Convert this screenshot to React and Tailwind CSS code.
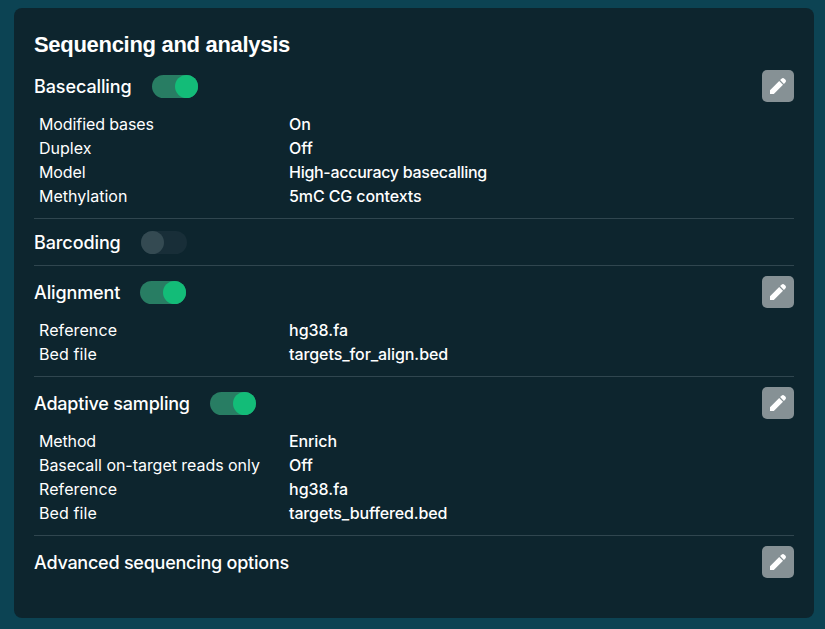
function Toggle({ on }) {
  return (
    <span className={`flex h-[23px] w-[46px] items-center rounded-full ${on ? 'justify-end bg-[#287d63]' : 'justify-start bg-[#182e38]'}`}>
      <span className={`size-[23px] rounded-full ${on ? 'bg-[#13bc78]' : 'bg-[#344a52]'}`} />
    </span>
  );
}

function EditButton() {
  return (
    <button className="ml-auto flex size-8 items-center justify-center rounded-[5px] bg-[#869195]">
      <svg viewBox="0 0 16 16" className="size-4 fill-white">
        <path d="M0 12.2V16h3.8L13 6.8 9.2 3zM10.1 2.1l1.4-1.4c1-.9 2-.9 2.9 0l.9.9c.9.9.9 1.9 0 2.9l-1.4 1.4z" />
      </svg>
    </button>
  );
}

function Heading({ title, width, tracking, on, toggle = true, edit = true }) {
  return (
    <div className={`flex items-center ${edit ? 'h-8' : 'h-[30px]'}`}>
      <h2 className={`${width} ${tracking} whitespace-nowrap text-[18px] font-medium leading-8 ${edit ? 'pt-px' : 'pt-[2px]'}`}>{title}</h2>
      {toggle && <Toggle on={on} />}
      {edit && <EditButton />}
    </div>
  );
}

function Details({ rows }) {
  return (
    <dl className="mt-[10px] grid grid-cols-[250px_1fr] pl-[5px] text-[16px] leading-6">
      {rows.map(([label, value, labelTracking = '', valueTracking = '']) => (
        <div key={label} className="contents">
          <dt className={labelTracking}>{label}</dt>
          <dd className={`font-medium ${valueTracking}`}>{value}</dd>
        </div>
      ))}
    </dl>
  );
}

export default function App() {
  return (
    <div className="h-[629px] w-[825px] bg-[#0c4353] pl-[14px] pt-2 font-['Inter',sans-serif] text-white">
      <main className="h-[610px] w-[800px] rounded-lg bg-[#0d252e] px-5 pt-5">
        <h1 className="h-[42px] pt-px font-['Liberation_Sans',sans-serif] text-[22px] font-bold leading-8 tracking-[-0.3px]">Sequencing and analysis</h1>
        <section className="h-[149px] border-b border-[#30464f]">
          <Heading title="Basecalling" width="w-[118px]" tracking="tracking-[-0.1px]" on />
          <Details
            rows={[
              ['Modified bases', 'On', 'tracking-[-0.1px]'],
              ['Duplex', 'Off'],
              ['Model', 'High-accuracy basecalling', 'tracking-[-0.1px]', 'tracking-[-0.28px]'],
              ['Methylation', '5mC CG contexts', '', 'tracking-[-0.1px]'],
            ]}
          />
        </section>
        <section className="h-[47px] border-b border-[#30464f] pt-2">
          <Heading title="Barcoding" width="w-[107px]" tracking="tracking-[-0.1px]" edit={false} />
        </section>
        <section className="h-[111px] border-b border-[#30464f] pt-[10px]">
          <Heading title="Alignment" width="w-[106px]" tracking="tracking-[-0.12px]" on />
          <Details
            rows={[
              ['Reference', 'hg38.fa', 'tracking-[0.1px]'],
              ['Bed file', 'targets_for_align.bed', 'tracking-[0.1px]', 'tracking-[-0.08px]'],
            ]}
          />
        </section>
        <section className="h-[159px] border-b border-[#30464f] pt-[10px]">
          <Heading title="Adaptive sampling" width="w-[176px]" tracking="tracking-[-0.2px]" on />
          <Details
            rows={[
              ['Method', 'Enrich', 'tracking-[-0.15px]', 'tracking-[-0.1px]'],
              ['Basecall on-target reads only', 'Off', 'tracking-[-0.04px]'],
              ['Reference', 'hg38.fa', 'tracking-[0.1px]'],
              ['Bed file', 'targets_buffered.bed', 'tracking-[0.1px]', 'tracking-[-0.13px]'],
            ]}
          />
        </section>
        <section className="pt-[10px]">
          <Heading title="Advanced sequencing options" width="w-[300px]" tracking="tracking-[-0.24px]" toggle={false} />
        </section>
      </main>
    </div>
  );
}
